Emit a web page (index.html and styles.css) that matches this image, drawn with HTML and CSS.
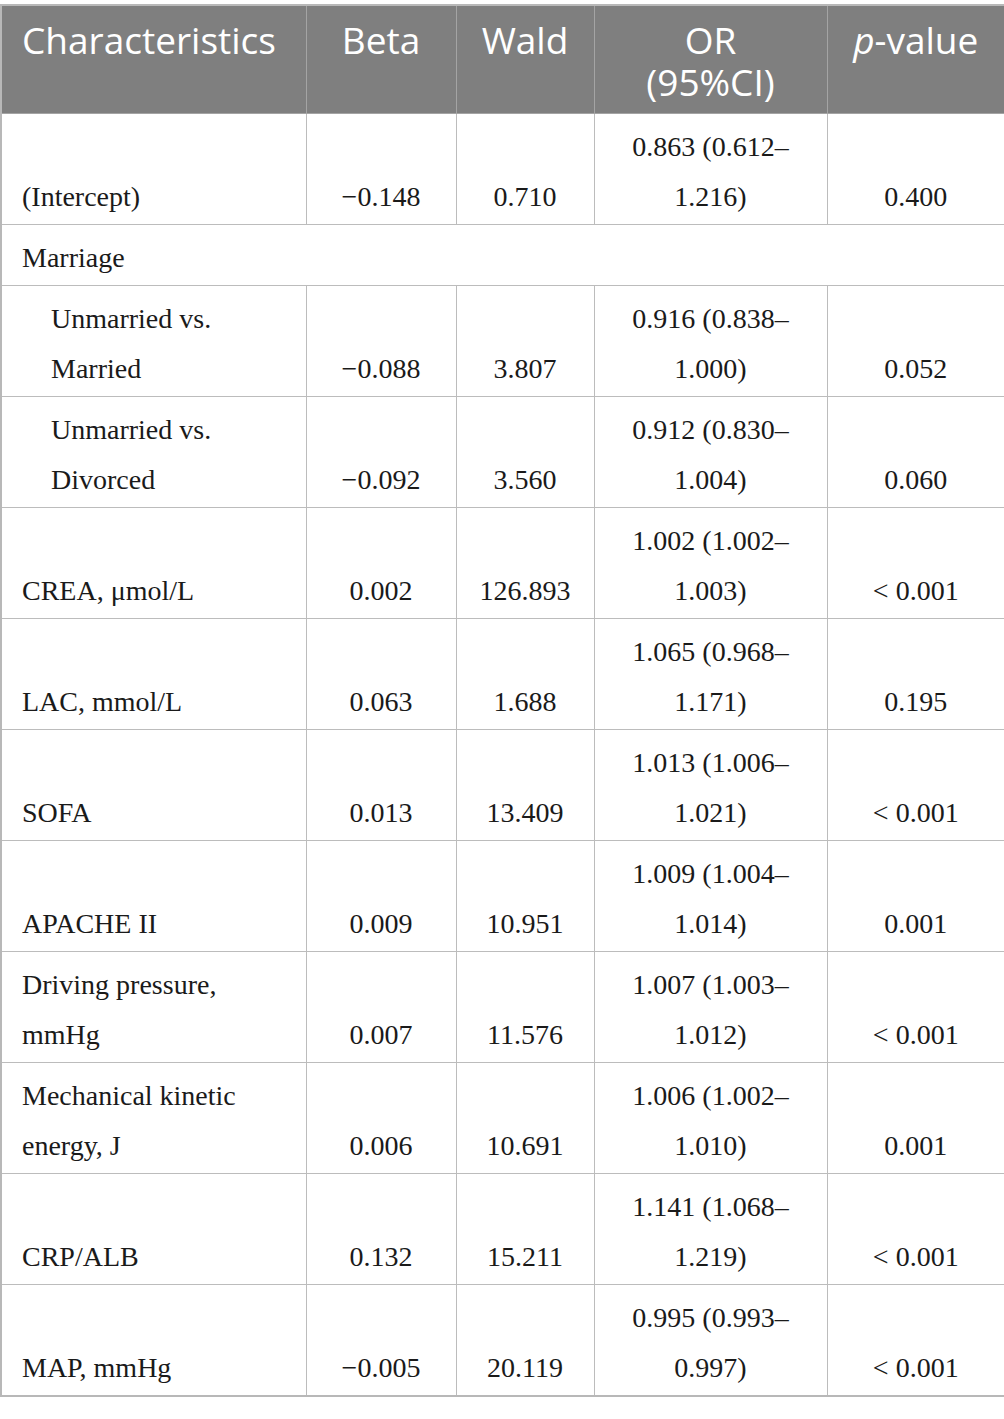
FILE: index.html
```html
<!DOCTYPE html>
<html>
<head>
<meta charset="utf-8">
<link rel="stylesheet" href="styles.css">
</head>
<body>
<table class="tbl">
<colgroup>
<col class="c1"><col class="c2"><col class="c3"><col class="c4"><col class="c5">
</colgroup>
<thead>
<tr>
<th class="left">Characteristics</th>
<th>Beta</th>
<th>Wald</th>
<th>OR<br>(95%CI)</th>
<th><i>p</i>-value</th>
</tr>
</thead>
<tbody>
<tr><td class="left">(Intercept)</td><td>−0.148</td><td>0.710</td><td>0.863 (0.612–<br>1.216)</td><td>0.400</td></tr>
<tr><td class="left span" colspan="5">Marriage</td></tr>
<tr><td class="left indent">Unmarried vs.<br>Married</td><td>−0.088</td><td>3.807</td><td>0.916 (0.838–<br>1.000)</td><td>0.052</td></tr>
<tr><td class="left indent">Unmarried vs.<br>Divorced</td><td>−0.092</td><td>3.560</td><td>0.912 (0.830–<br>1.004)</td><td>0.060</td></tr>
<tr><td class="left">CREA, μmol/L</td><td>0.002</td><td>126.893</td><td>1.002 (1.002–<br>1.003)</td><td>&lt; 0.001</td></tr>
<tr><td class="left">LAC, mmol/L</td><td>0.063</td><td>1.688</td><td>1.065 (0.968–<br>1.171)</td><td>0.195</td></tr>
<tr><td class="left">SOFA</td><td>0.013</td><td>13.409</td><td>1.013 (1.006–<br>1.021)</td><td>&lt; 0.001</td></tr>
<tr><td class="left">APACHE II</td><td>0.009</td><td>10.951</td><td>1.009 (1.004–<br>1.014)</td><td>0.001</td></tr>
<tr><td class="left">Driving pressure,<br>mmHg</td><td>0.007</td><td>11.576</td><td>1.007 (1.003–<br>1.012)</td><td>&lt; 0.001</td></tr>
<tr><td class="left">Mechanical kinetic<br>energy, J</td><td>0.006</td><td>10.691</td><td>1.006 (1.002–<br>1.010)</td><td>0.001</td></tr>
<tr><td class="left">CRP/ALB</td><td>0.132</td><td>15.211</td><td>1.141 (1.068–<br>1.219)</td><td>&lt; 0.001</td></tr>
<tr><td class="left">MAP, mmHg</td><td>−0.005</td><td>20.119</td><td>0.995 (0.993–<br>0.997)</td><td>&lt; 0.001</td></tr>
</tbody>
</table>
</body>
</html>
```

FILE: styles.css
```css
html, body {
  margin: 0;
  padding: 0;
  background: #ffffff;
}
body {
  padding-top: 4px;
}
.tbl {
  width: 1004px;
  table-layout: fixed;
  border-collapse: collapse;
  border: 2px solid #b8b8b8;
}
.c1 { width: 305px; }
.c2 { width: 150px; }
.c3 { width: 138px; }
.c4 { width: 233px; }
.c5 { width: 178px; }
.tbl th {
  background: #7f7f7f;
  color: #ffffff;
  font-family: "Open Sans", "Noto Sans", sans-serif;
  font-weight: 400;
  font-size: 37px;
  line-height: 42px;
  text-align: center;
  vertical-align: top;
  padding: 13px 4px 10px;
  border: 1px solid #a4a4a4;
  border-top: none;
}
.tbl th.left {
  text-align: left;
  padding-left: 20px;
}
.tbl th i {
  font-style: italic;
}
.tbl td {
  font-family: "Liberation Serif", "Times New Roman", serif;
  font-size: 28px;
  line-height: 50px;
  color: #1a1a1a;
  text-align: center;
  vertical-align: bottom;
  padding: 8px 8px 2px;
  border: 1px solid #bcbcbc;
}
.tbl td.left {
  text-align: left;
  padding-left: 20px;
}
.tbl td.indent {
  padding-left: 49px;
}
```
